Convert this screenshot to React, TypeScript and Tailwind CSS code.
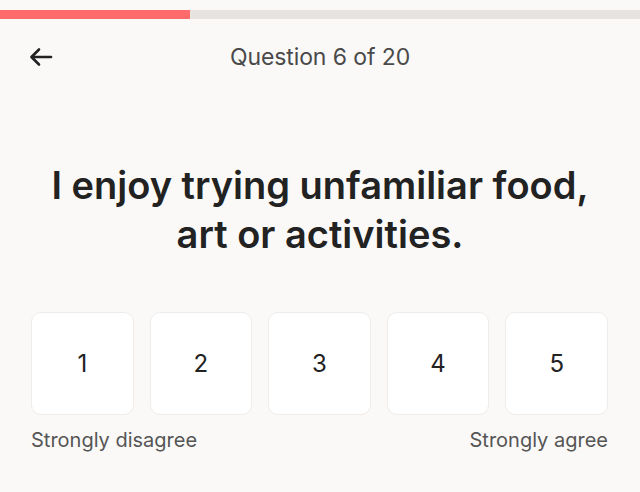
import * as React from 'react';

const options = [1, 2, 3, 4, 5];

export default function App() {
  const [selected, setSelected] = React.useState<number | null>(null);

  return (
    <div className="min-h-[492px] w-full bg-[#faf9f7] text-[#222] font-['Inter',sans-serif]">
      {/* Progress */}
      <div className="pt-[10px]">
        <div className="h-[9px] w-full bg-[#e6e3e0]">
          <div className="h-full bg-[#ff6b6b]" style={{ width: `${(6 / 20) * 100 - 0.3}%` }} />
        </div>
      </div>

      {/* Header */}
      <div className="relative flex h-[58px] items-center justify-center mt-[9px]">
        <button className="absolute left-[27px] top-1/2 -translate-y-1/2 p-0.5 text-[#222]">
          <svg width="24" height="20" viewBox="0 0 24 20" fill="none" stroke="currentColor" strokeWidth="2.6" strokeLinecap="round" strokeLinejoin="round">
            <path d="M22 10H3" />
            <path d="M10 2.5L2.5 10L10 17.5" />
          </svg>
        </button>
        <span className="text-[23px] text-[#4a4a4a] tracking-[-0.1px]">Question 6 of 20</span>
      </div>

      {/* Question */}
      <h1 className="mt-[75px] px-8 text-center text-[38px] font-semibold leading-[49px] text-[#222]">
        I enjoy trying unfamiliar food,
        <br />
        art or activities.
      </h1>

      {/* Scale */}
      <div className="mt-[53px] pl-[31px] pr-[32px]">
        <div className="grid grid-cols-5 gap-4">
          {options.map((n) => (
            <button
              key={n}
              onClick={() => setSelected(n)}
              className={
                selected === n
                  ? 'flex h-[103px] items-center justify-center rounded-[10px] border border-[#ff6b6b] bg-white text-[24px] text-[#222]'
                  : 'flex h-[103px] items-center justify-center rounded-[10px] border border-[#efecea] bg-white text-[24px] text-[#222]'
              }
            >
              {n}
            </button>
          ))}
        </div>
        <div className="mt-[10px] flex justify-between text-[20px] text-[#555]">
          <span>Strongly disagree</span>
          <span>Strongly agree</span>
        </div>
      </div>
    </div>
  );
}
